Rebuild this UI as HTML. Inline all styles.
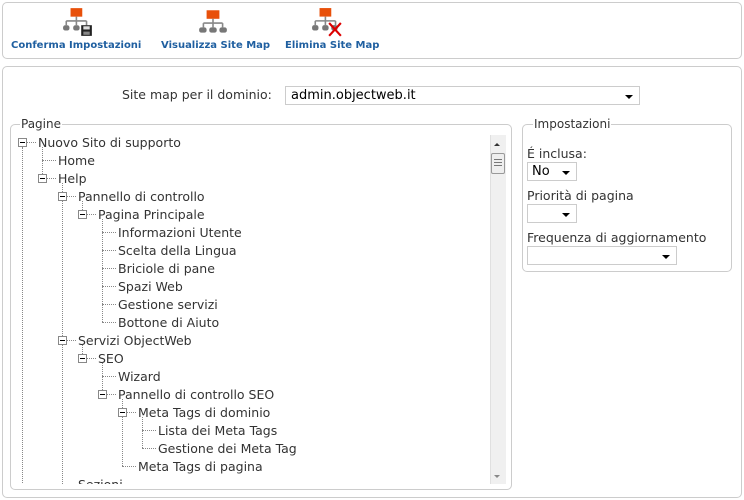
<!DOCTYPE html>
<html><head><meta charset="utf-8"><style>
*{margin:0;padding:0;box-sizing:border-box}
html,body{width:744px;height:500px;overflow:hidden}
body{background:#fff;position:relative;font-family:"DejaVu Sans","Liberation Sans",sans-serif;font-size:12px;color:#333}
.box{position:absolute;border:1px solid #ccc;border-radius:5px}
.tb{position:absolute;font-family:"DejaVu Sans",sans-serif;font-weight:bold;font-size:10px;color:#1f5fa0;top:40px}
.ic{position:absolute;top:7px}
.lg{position:absolute;background:#fff;padding:0 1px;font-size:12px;color:#333}
.sel{position:absolute;border:1px solid #ccc;background:#fff;height:19px}
.sel:after{content:"";position:absolute;right:6px;top:8px;border-left:4px solid transparent;border-right:4px solid transparent;border-top:4px solid #000}
.t{position:absolute;white-space:nowrap;font-size:12.5px;color:#333}
.h{position:absolute;border-top:1px dotted #888;height:0}
.v{position:absolute;border-left:1px dotted #888;width:0}
.bx{position:absolute;width:9px;height:9px;border:1px solid #888;background:#fff}
.bx:after{content:"";position:absolute;left:1px;top:3px;width:5px;height:1px;background:#000}
</style></head><body>
<div class="box" style="left:2px;top:2px;width:740px;height:57px"></div>
<svg class="ic" style="left:62px" width="32" height="30" viewBox="0 0 30 28"><rect x="8" y="1" width="11" height="8" fill="#e8500a"/><path d="M13.5 9v4M4 13h19M4 13v4M13.5 13v4M23 13v4" stroke="#888" stroke-width="1.5" fill="none"/><rect x="1" y="17" width="6" height="5" rx="2" fill="#777"/><rect x="10.5" y="17" width="6" height="5" rx="2" fill="#777"/><rect x="18" y="17" width="10" height="10" fill="#222"/><rect x="20" y="18" width="6" height="3" fill="#ddd"/><rect x="20" y="23" width="6" height="3" fill="#888"/></svg>
<div class="tb" style="left:11px">Conferma Impostazioni</div>
<svg class="ic" style="left:197px" width="32" height="30" viewBox="0 0 30 28"><rect x="9" y="3" width="12" height="8" fill="#e8500a"/><path d="M15 11v4M6 15h18M6 15v4M15 15v4M24 15v4" stroke="#888" stroke-width="1.5" fill="none"/><rect x="2" y="19" width="7" height="5" rx="2" fill="#777"/><rect x="11.5" y="19" width="7" height="5" rx="2" fill="#777"/><rect x="21" y="19" width="7" height="5" rx="2" fill="#777"/></svg>
<div class="tb" style="left:161px">Visualizza Site Map</div>
<svg class="ic" style="left:311px" width="32" height="32" viewBox="0 0 30 30"><rect x="8" y="1" width="11" height="8" fill="#e8500a"/><path d="M13.5 9v4M4 13h19M4 13v4M13.5 13v4M23 13v4" stroke="#888" stroke-width="1.5" fill="none"/><rect x="1" y="17" width="6" height="5" rx="2" fill="#777"/><rect x="10.5" y="17" width="6" height="5" rx="2" fill="#777"/><rect x="19" y="17" width="6" height="5" rx="2" fill="#777"/><path d="M17 15l11 12M28 15l-11 12" stroke="#d00" stroke-width="2"/></svg>
<div class="tb" style="left:285px">Elimina Site Map</div>

<div class="box" style="left:2px;top:66px;width:740px;height:432px"></div>
<div class="t" style="left:122px;top:87px;font-size:12.5px">Site map per il dominio:</div>
<div class="sel" style="left:285px;top:86px;width:355px"><span style="position:absolute;left:5px;top:1px;font-size:13px;color:#000">admin.objectweb.it</span></div>

<div class="box" style="left:10px;top:124px;width:502px;height:366px"></div>
<div class="lg" style="left:20px;top:117px">Pagine</div>
<div style="position:absolute;left:490px;top:135px;width:16px;height:349px;background:#f0f0f0;border-left:1px solid #e0e0e0"></div>
<div style="position:absolute;left:494px;top:143px;border-left:3px solid transparent;border-right:3px solid transparent;border-bottom:3px solid #333"></div>
<div style="position:absolute;left:491px;top:153px;width:14px;height:21px;background:#eee;border:1px solid #999;border-radius:2px"></div>
<div style="position:absolute;left:494px;top:159px;width:8px;height:7px;border-top:1px solid #777;border-bottom:1px solid #777"></div>
<div style="position:absolute;left:494px;top:162px;width:8px;height:1px;background:#777"></div>
<div style="position:absolute;left:494px;top:475px;border-left:3px solid transparent;border-right:3px solid transparent;border-top:3px solid #888"></div>
<div id="tree" style="position:absolute;left:11px;top:133px;width:478px;height:351px;overflow:hidden"></div>

<div class="box" style="left:522px;top:124px;width:210px;height:148px"></div>
<div class="lg" style="left:533px;top:117px">Impostazioni</div>
<div class="t" style="left:527px;top:146px">É inclusa:</div>
<div class="sel" style="left:527px;top:162px;width:50px"><span style="position:absolute;left:4px;top:1px;font-size:13px;color:#000">No</span></div>
<div class="t" style="left:527px;top:188px">Priorità di pagina</div>
<div class="sel" style="left:527px;top:204px;width:50px"></div>
<div class="t" style="left:527px;top:230px">Frequenza di aggiornamento</div>
<div class="sel" style="left:527px;top:246px;width:150px"></div>

<script>
var rows=[[0,"Nuovo Sito di supporto",1],[1,"Home",0],[1,"Help",1],[2,"Pannello di controllo",1],[3,"Pagina Principale",1],[4,"Informazioni Utente",0],[4,"Scelta della Lingua",0],[4,"Briciole di pane",0],[4,"Spazi Web",0],[4,"Gestione servizi",0],[4,"Bottone di Aiuto",0],[2,"Servizi ObjectWeb",1],[3,"SEO",1],[4,"Wizard",0],[4,"Pannello di controllo SEO",1],[5,"Meta Tags di dominio",1],[6,"Lista dei Meta Tags",0],[6,"Gestione dei Meta Tag",0],[5,"Meta Tags di pagina",0],[2,"Sezioni",0]];
var T=document.getElementById('tree'),h='';var ox=-11,oy=-133;
function yc(i){return 142+18*i+oy}
for(var i=0;i<rows.length;i++){var L=rows[i][0],x=22+20*L+ox,y=yc(i);
 h+='<div class="h" style="left:'+x+'px;top:'+y+'px;width:14px"></div>';
 if(rows[i][2])h+='<div class="bx" style="left:'+(x-4)+'px;top:'+(y-4)+'px"></div>';
 h+='<div class="t" style="left:'+(38+20*L+ox)+'px;top:'+(y-7)+'px">'+rows[i][1]+'</div>';
 var last=-1;for(var j=i+1;j<rows.length;j++){if(rows[j][0]<L)break;if(rows[j][0]==L)last=j;}
 if(last>0)h+='<div class="v" style="left:'+x+'px;top:'+(y+5)+'px;height:'+(yc(last)-y-5)+'px"></div>';
 if(rows[i][2]){var lc=-1;for(var j=i+1;j<rows.length;j++){if(rows[j][0]<=L)break;if(rows[j][0]==L+1)lc=j;}
  if(lc>0)h+='<div class="v" style="left:'+(x+20)+'px;top:'+(y+5)+'px;height:'+(yc(lc)-y-5)+'px"></div>';}
}
h+='<div class="v" style="left:'+(22+ox)+'px;top:'+(yc(0)+5)+'px;height:340px"></div>';
T.innerHTML=h;
</script>
</body></html>
